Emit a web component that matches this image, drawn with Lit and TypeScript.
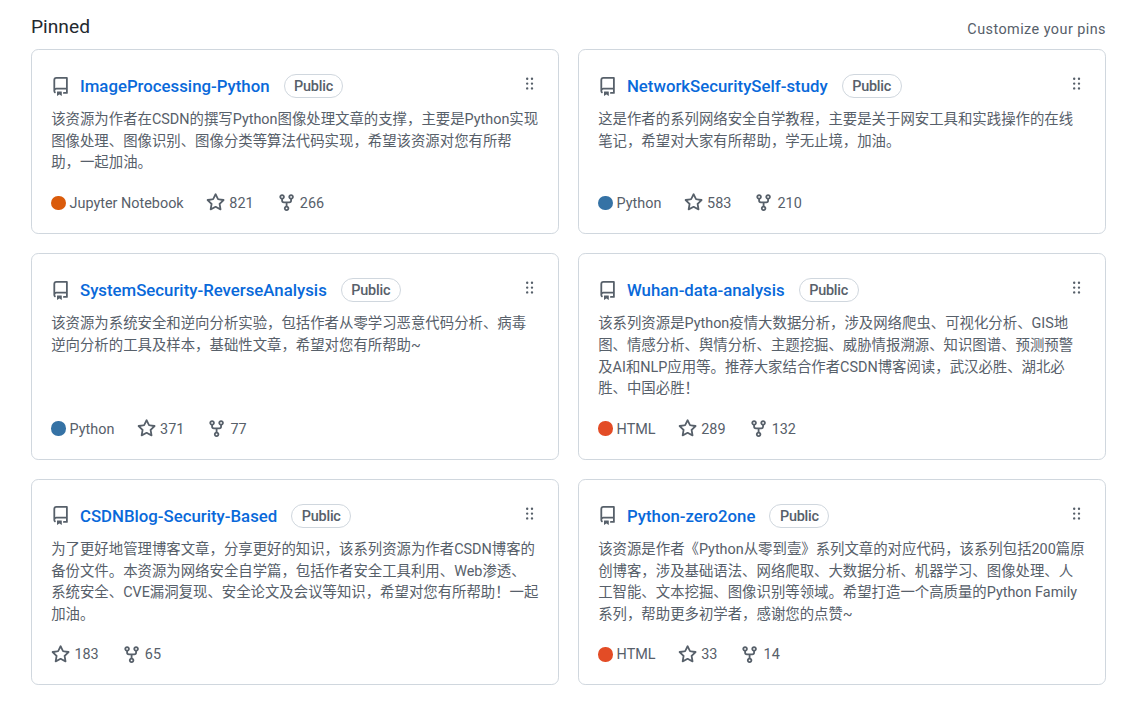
import { LitElement, html, css, svg } from "lit";
import { customElement } from "lit/decorators.js";

const REPO = "M2 2.5A2.5 2.5 0 0 1 4.5 0h8.75a.75.75 0 0 1 .75.75v12.5a.75.75 0 0 1-.75.75h-2.5a.75.75 0 0 1 0-1.5h1.75v-2h-8a1 1 0 0 0-.714 1.7.75.75 0 1 1-1.072 1.05A2.495 2.495 0 0 1 2 11.5Zm10.5-1h-8a1 1 0 0 0-1 1v6.708A2.486 2.486 0 0 1 4.5 9h8ZM5 12.25a.25.25 0 0 1 .25-.25h3.5a.25.25 0 0 1 .25.25v3.25a.25.25 0 0 1-.4.2l-1.45-1.087a.249.249 0 0 0-.3 0L5.4 15.7a.25.25 0 0 1-.4-.2Z";
const STAR = "M8 .25a.75.75 0 0 1 .673.418l1.882 3.815 4.21.612a.75.75 0 0 1 .416 1.279l-3.046 2.97.719 4.192a.751.751 0 0 1-1.088.791L8 12.347l-3.766 1.98a.75.75 0 0 1-1.088-.79l.72-4.194L.818 6.374a.75.75 0 0 1 .416-1.28l4.21-.611L7.327.668A.75.75 0 0 1 8 .25Zm0 2.445L6.615 5.5a.75.75 0 0 1-.564.41l-3.097.45 2.24 2.184a.75.75 0 0 1 .216.664l-.528 3.084 2.769-1.456a.75.75 0 0 1 .698 0l2.77 1.456-.53-3.084a.75.75 0 0 1 .216-.664l2.24-2.183-3.096-.45a.75.75 0 0 1-.564-.41L8 2.694Z";
const FORK = "M5 5.372v.878c0 .414.336.75.75.75h4.5a.75.75 0 0 0 .75-.75v-.878a2.25 2.25 0 1 1 1.5 0v.878a2.25 2.25 0 0 1-2.25 2.25h-1.5v2.128a2.251 2.251 0 1 1-1.5 0V8.5h-1.5A2.25 2.25 0 0 1 3.5 6.25v-.878a2.25 2.25 0 1 1 1.5 0ZM5 3.25a.75.75 0 1 0-1.5 0 .75.75 0 0 0 1.5 0Zm6.75.75a.75.75 0 1 0 0-1.5.75.75 0 0 0 0 1.5Zm-3 8.75a.75.75 0 1 0-1.5 0 .75.75 0 0 0 1.5 0Z";
const GRAB = "M10 13a1 1 0 1 1 0-2 1 1 0 0 1 0 2Zm0-4a1 1 0 1 1 0-2 1 1 0 0 1 0 2Zm-4 4a1 1 0 1 1 0-2 1 1 0 0 1 0 2Zm5-9a1 1 0 1 1-2 0 1 1 0 0 1 2 0ZM7 8a1 1 0 1 1-2 0 1 1 0 0 1 2 0ZM6 5a1 1 0 1 1 0-2 1 1 0 0 1 0 2Z";

const icon = (d: string, cls: string) => html`<svg class=${cls} viewBox="0 0 16 16" aria-hidden="true">${svg`<path fill-rule="evenodd" d=${d}></path>`}</svg>`;

interface Repo { name: string; lines: string[]; lang?: string; color?: string; stars: string; forks: string; }

const REPOS: Repo[] = [
  { name: "ImageProcessing-Python", lines: ["该资源为作者在CSDN的撰写Python图像处理文章的支撑，主要是Python实现", "图像处理、图像识别、图像分类等算法代码实现，希望该资源对您有所帮", "助，一起加油。"], lang: "Jupyter Notebook", color: "#da5b0b", stars: "821", forks: "266" },
  { name: "NetworkSecuritySelf-study", lines: ["这是作者的系列网络安全自学教程，主要是关于网安工具和实践操作的在线", "笔记，希望对大家有所帮助，学无止境，加油。"], lang: "Python", color: "#3572a5", stars: "583", forks: "210" },
  { name: "SystemSecurity-ReverseAnalysis", lines: ["该资源为系统安全和逆向分析实验，包括作者从零学习恶意代码分析、病毒", "逆向分析的工具及样本，基础性文章，希望对您有所帮助~"], lang: "Python", color: "#3572a5", stars: "371", forks: "77" },
  { name: "Wuhan-data-analysis", lines: ["该系列资源是Python疫情大数据分析，涉及网络爬虫、可视化分析、GIS地", "图、情感分析、舆情分析、主题挖掘、威胁情报溯源、知识图谱、预测预警", "及AI和NLP应用等。推荐大家结合作者CSDN博客阅读，武汉必胜、湖北必", "胜、中国必胜！"], lang: "HTML", color: "#e34c26", stars: "289", forks: "132" },
  { name: "CSDNBlog-Security-Based", lines: ["为了更好地管理博客文章，分享更好的知识，该系列资源为作者CSDN博客的", "备份文件。本资源为网络安全自学篇，包括作者安全工具利用、Web渗透、", "系统安全、CVE漏洞复现、安全论文及会议等知识，希望对您有所帮助！一起", "加油。"], stars: "183", forks: "65" },
  { name: "Python-zero2one", lines: ["该资源是作者《Python从零到壹》系列文章的对应代码，该系列包括200篇原", "创博客，涉及基础语法、网络爬取、大数据分析、机器学习、图像处理、人", "工智能、文本挖掘、图像识别等领域。希望打造一个高质量的Python Family", "系列，帮助更多初学者，感谢您的点赞~"], lang: "HTML", color: "#e34c26", stars: "33", forks: "14" },
];

@customElement("app-root")
export class AppRoot extends LitElement {
  static styles = css`
    :host {
      display: block;
      width: 1122px;
      height: 701px;
      box-sizing: border-box;
      overflow: hidden;
      background: #fff;
      padding: 12px 16px 0 31px;
      font-family: Roboto, "Noto Sans CJK SC", sans-serif;
      color: #57606a;
    }
    .head { display: flex; justify-content: space-between; align-items: flex-end; height: 30px; margin-bottom: 7px; }
    .pinned { font-size: 19.2px; line-height: 30px; color: #24292f; font-weight: 400; margin: 0; }
    .custom { font-size: 14.4px; line-height: 24px; color: #57606a; letter-spacing: 0.45px; }
    .grid { display: grid; grid-template-columns: 528px 528px; column-gap: 19px; row-gap: 19.2px; }
    .card {
      position: relative;
      box-sizing: border-box;
      border: 1px solid #d0d7de;
      border-radius: 7.2px;
      padding: 19.2px;
      display: flex;
      flex-direction: column;
    }
    .title { display: flex; align-items: center; height: 34px; margin-bottom: 6px; }
    .repo { width: 19.2px; height: 19.2px; fill: #57606a; margin-right: 9.6px; flex: none; }
    .name { font-size: 16.8px; font-weight: 500; line-height: 24px; color: #0969da; }
    .badge {
      margin-left: 14px;
      font-size: 14.4px;
      font-weight: 500;
      line-height: 21px;
      letter-spacing: -0.2px;
      padding: 1px 9.5px 0;
      border: 1px solid #d0d7de;
      border-radius: 12px;
      color: #57606a;
    }
    .grab { position: absolute; top: 24px; right: 19.2px; width: 19.2px; height: 19.2px; fill: #57606a; }
    .desc { font-size: 14.4px; line-height: 21.6px; flex: 1; margin: 0 0 18.2px; }
    .line { display: block; white-space: nowrap; }
    .meta { display: flex; align-items: center; height: 21.6px; font-size: 14.4px; }
    .dot { width: 14.4px; height: 14.4px; border-radius: 50%; margin-right: 4px; flex: none; }
    .txt { line-height: 20px; padding-top: 2px; }
    .lang { margin-right: 22.5px; }
    .stat { display: flex; align-items: center; margin-right: 23px; }
    .ic { width: 19.2px; height: 19.2px; fill: #57606a; margin-right: 4px; }
  `;

  render() {
    return html`
      <div class="head">
        <h2 class="pinned">Pinned</h2>
        <span class="custom">Customize your pins</span>
      </div>
      <div class="grid">
        ${REPOS.map((r) => html`
          <div class="card">
            <div class="title">
              ${icon(REPO, "repo")}
              <span class="name">${r.name}</span>
              <span class="badge">Public</span>
            </div>
            ${icon(GRAB, "grab")}
            <p class="desc">${r.lines.map((l) => html`<span class="line">${l}</span>`)}</p>
            <div class="meta">
              ${r.lang ? html`<span class="dot" style="background:${r.color}"></span><span class="lang txt">${r.lang}</span>` : ""}
              <span class="stat">${icon(STAR, "ic")}<span class="txt">${r.stars}</span></span>
              <span class="stat">${icon(FORK, "ic")}<span class="txt">${r.forks}</span></span>
            </div>
          </div>
        `)}
      </div>
    `;
  }
}
